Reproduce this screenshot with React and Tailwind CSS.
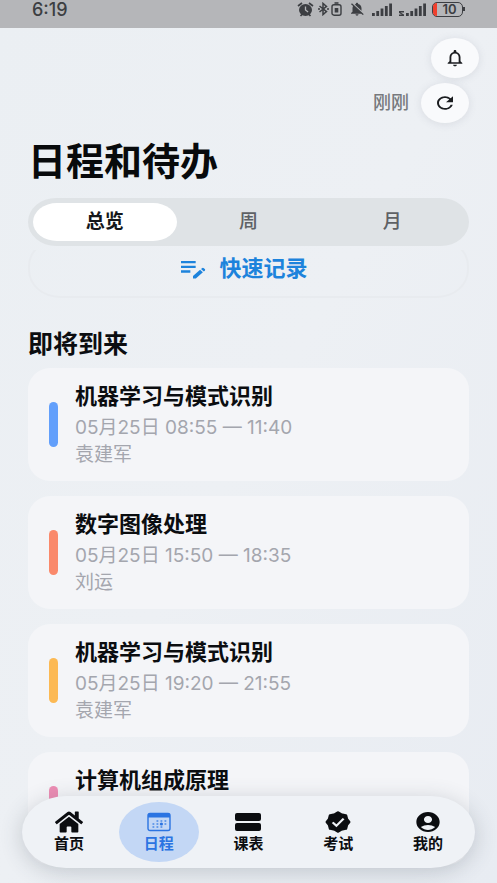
import React, { useState } from 'react'
import { MdNotificationsOff, MdNotificationsNone, MdRefresh, MdEditNote, MdAccountCircle } from 'react-icons/md'
import { FaHome } from 'react-icons/fa'

const tabs = ['总览', '周', '月']

const events = [
    { id: 1, title: '机器学习与模式识别', time: '05月25日 08:55 — 11:40', teacher: '袁建军', color: 'bg-[#629ffb]' },
    { id: 2, title: '数字图像处理', time: '05月25日 15:50 — 18:35', teacher: '刘运', color: 'bg-[#fa896b]' },
    { id: 3, title: '机器学习与模式识别', time: '05月25日 19:20 — 21:55', teacher: '袁建军', color: 'bg-[#fcb954]' },
    { id: 4, title: '计算机组成原理', time: '', teacher: '', color: 'bg-[#ec8db4]' },
]

const AlarmIcon = () => (
    <svg className="w-[17px] h-[15px]" viewBox="0 0 17 15" fill="none">
        <path d="M1 4l4-3M16 4l-4-3M3.5 14l2-2M13.5 14l-2-2" stroke="currentColor" strokeWidth="1.7" />
        <ellipse cx="8.5" cy="8" rx="6.5" ry="6" fill="currentColor" />
        <path d="M8.5 4.5V8l2.6 2" stroke="#b5b6b9" strokeWidth="1.3" />
    </svg>
)

const BluetoothIcon = () => (
    <svg className="w-[11px] h-[14px]" viewBox="0 0 11 14" fill="none" stroke="currentColor">
        <path d="M1.5 4l7 5.6L5 12.6V1.4l3.5 3L1.5 10" strokeWidth="1.5" />
        <path d="M0 7h2M9 7h2" strokeWidth="1.7" />
    </svg>
)

const CalendarIcon = () => (
    <svg className="w-6 h-5" viewBox="0 0 24 20" fill="none">
        <rect x="1" y="1.5" width="22" height="17" rx="2" stroke="#2b74e2" strokeWidth="1.4" />
        <path d="M1 3a2 2 0 0 1 2-2h18a2 2 0 0 1 2 2v2.5H1z" fill="#2b74e2" />
        <path d="M9.5 9h1.8M13.5 9h1.8M17.5 9h1.8M5.5 12h1.8M9.5 12h1.8M17.5 12h1.8M5.5 15h1.8M9.5 15h1.8M13.5 15h1.8" stroke="#2b74e2" strokeWidth="1.3" opacity="0.8" />
        <circle cx="14.4" cy="12" r="1.6" fill="#2b74e2" />
    </svg>
)

const TableIcon = () => (
    <svg className="w-7 h-5" viewBox="0 0 28 20" fill="currentColor">
        <rect x="1" y="1" width="26" height="8" rx="2" />
        <rect x="1" y="11" width="26" height="8" rx="2" />
    </svg>
)

const VerifiedIcon = () => (
    <svg className="w-7 h-6" viewBox="0 0 24 24" preserveAspectRatio="none" fill="none">
        <path d="M12 2.6l2.8 1.9 3.8.9.9 3.8L21.4 12l-1.9 2.8-.9 3.8-3.8.9-2.8 1.9-2.8-1.9-3.8-.9-.9-3.8L2.6 12l1.9-2.8.9-3.8 3.8-.9z" fill="currentColor" stroke="currentColor" strokeWidth="2.6" strokeLinejoin="round" />
        <path d="M7.4 12.4l3.2 3.4 6.2-7.2" stroke="#eff2f6" strokeWidth="2" />
    </svg>
)

const navItems = [
    { label: '首页', icon: <FaHome className="w-7 h-6" preserveAspectRatio="none" /> },
    { label: '日程', icon: <CalendarIcon /> },
    { label: '课表', icon: <TableIcon /> },
    { label: '考试', icon: <VerifiedIcon /> },
    { label: '我的', icon: <MdAccountCircle className="w-7 h-6" preserveAspectRatio="none" /> },
]

const Signal = ({ roaming }) => (
    <svg className={roaming ? 'w-7 h-4' : 'w-5 h-4'} viewBox={roaming ? '-8 0 28 16' : '0 0 20 16'} fill="currentColor">
        {roaming && <path d="M-7 10h5v1.5h-3.5l3.5 2V15h-5v-1.5h3L-7 12z" />}
        <rect x="0" y="12" width="2.8" height="3" />
        <rect x="4.3" y="10" width="2.8" height="5" />
        <rect x="8.6" y="7.5" width="2.8" height="7.5" />
        <rect x="12.9" y="5" width="2.8" height="10" />
        <rect x="17.2" y="2.5" width="2.8" height="12.5" />
    </svg>
)

const StatusBar = () => (
    <div className="h-7 shrink-0 flex justify-between items-start px-8 bg-[#b5b6b9] text-[#3c3e42]">
        <span className="text-lg leading-5 font-medium font-['Inter',sans-serif]">6:19</span>
        <div className="flex items-center h-[18px]">
            <AlarmIcon />
            <span className="ml-1"><BluetoothIcon /></span>
            <svg className="w-[11px] h-[14px] ml-0.5 mr-1.5" viewBox="0 0 11 14" fill="none">
                <path d="M3.5 1h4" stroke="currentColor" strokeWidth="1.6" />
                <rect x="1" y="2.8" width="9" height="10.4" rx="2" stroke="currentColor" strokeWidth="1.4" />
                <rect x="3.7" y="6" width="3.6" height="4.5" fill="currentColor" />
            </svg>
            <MdNotificationsOff className="w-[18px] h-4 mr-1.5" preserveAspectRatio="none" />
            <Signal />
            <span className="ml-1.5"><Signal roaming /></span>
            <div className="ml-1.5 w-[31px] h-[15px] rounded-[5px] border border-[#3c3e42] overflow-hidden flex items-center">
                <span className="w-1 h-full bg-[#f0402d]" />
                <span className="flex-1 text-center text-[13px] leading-[13px] font-semibold font-['Inter',sans-serif]">10</span>
            </div>
            <span className="w-0.5 h-1 bg-[#3c3e42]" />
        </div>
    </div>
)

const EventCard = ({ event }) => (
    <li className="h-[113px] shrink-0 flex items-center gap-[17px] pl-[21px] pr-4 rounded-[22px] bg-[#f4f5f8]">
        <span className={`w-[9px] h-[45px] rounded-full ${event.color}`} />
        <div className="h-[85px]">
            <h3 className="text-[22px] leading-7 font-bold text-[#0b0d10]">{event.title}</h3>
            <p className="mt-1 text-[19px] leading-7 text-[#a4a6ae]">{event.time}</p>
            <p className="text-[19px] leading-[26px] text-[#a4a6ae]">{event.teacher}</p>
        </div>
    </li>
)

const App = () => {

    const [activeTab, setActiveTab] = useState('总览')
    const [activeNav, setActiveNav] = useState('日程')

    return (
        <div className="relative h-screen flex flex-col overflow-hidden bg-linear-to-br from-[#ebeff3] via-[#edf0f4] to-[#e8ecf2] font-['Inter','Noto_Sans_CJK_SC',sans-serif]">
            <StatusBar />

            <header className="shrink-0 px-7">
                <div className="flex justify-end -mr-2.5 pt-2.5">
                    <button aria-label="通知" className="w-12 h-10 flex items-center justify-center rounded-[50%] bg-[#f9fafc] shadow-[0_1px_8px_rgba(90,100,120,0.14)] text-[#1b1d20]">
                        <MdNotificationsNone className="w-[22px] h-5" preserveAspectRatio="none" />
                    </button>
                </div>
                <div className="flex justify-end items-center gap-3 mt-[5px]">
                    <span className="text-lg leading-6 font-medium text-[#77797d]">刚刚</span>
                    <button aria-label="刷新" className="w-12 h-10 flex items-center justify-center rounded-[50%] bg-[#f9fafc] shadow-[0_1px_8px_rgba(90,100,120,0.14)] text-[#1b1d20]">
                        <MdRefresh className="w-6 h-5" preserveAspectRatio="none" />
                    </button>
                </div>
                <h1 className="mt-4 text-[38px] leading-[44px] font-bold text-[#080a0c]">日程和待办</h1>
                <div className="mt-[15px] flex p-[5px] rounded-[28px/24px] bg-[#dfe3e6]">
                    {tabs.map((tab) => (
                        <button
                            key={tab}
                            onClick={() => setActiveTab(tab)}
                            className={`flex-1 h-[38px] rounded-[24px/19px] text-[19px] leading-6 ${activeTab === tab ? 'bg-white font-bold text-[#15171a]' : 'font-medium text-[#5e6165]'}`}
                        >
                            {tab}
                        </button>
                    ))}
                </div>
            </header>

            <main className="flex-1 min-h-0 mt-1 px-7 overflow-hidden">
                <button className="-mt-3 w-full h-[60px] pr-3 flex items-center justify-center gap-2.5 rounded-[32px/28px] border-2 border-[#e8ebef] text-[#1d83dc]">
                    <MdEditNote className="w-8 h-7" preserveAspectRatio="none" />
                    <span className="text-[22px] leading-7 font-bold">快速记录</span>
                </button>

                <h2 className="mt-7 text-[25px] leading-9 font-bold text-[#0b0d10]">即将到来</h2>
                <ul className="mt-1.5 flex flex-col gap-[15px]">
                    {events.map((event) => <EventCard key={event.id} event={event} />)}
                </ul>
            </main>

            <nav className="absolute bottom-[15px] left-[22px] right-[22px] h-[72px] px-0.5 flex items-center rounded-[44px/36px] bg-[#eff2f6] shadow-[0_4px_22px_rgba(60,70,85,0.24)]">
                {navItems.map((item) => (
                    <a
                        key={item.label}
                        href="#"
                        onClick={(e) => { e.preventDefault(); setActiveNav(item.label) }}
                        className={`flex-1 h-[60px] mx-[5px] flex flex-col items-center justify-center rounded-[50%] ${activeNav === item.label ? 'bg-[#c3d7f5] text-[#2b74e2]' : 'text-[#0b0d10]'}`}
                    >
                        <span className="h-6 flex items-center">{item.icon}</span>
                        <span className="text-[15px] leading-5 font-bold">{item.label}</span>
                    </a>
                ))}
            </nav>
        </div>
    )
}

export default App
